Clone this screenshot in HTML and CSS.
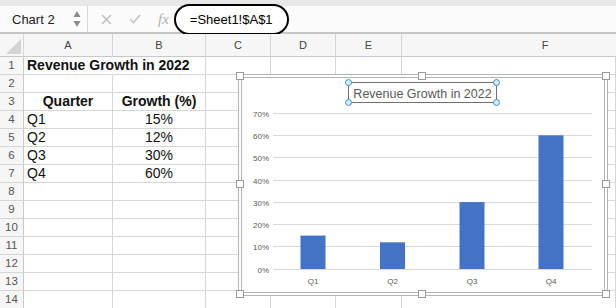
FILE: index.html
```html
<!DOCTYPE html>
<html lang="en">
<head>
    <meta charset="UTF-8">
    <title>Revenue Growth - Sheet1</title>
    <link rel="stylesheet" href="styles.css">
</head>
<body>
    <div class="top-strip"></div>
    <div class="formula-bar">
        <div class="name-box">
            <span>Chart 2</span>
            <svg class="spinner" width="8" height="18" viewBox="0 0 8 18">
                <path d="M4 1 L7.5 7 L0.5 7 Z" fill="#8a8a8a"/>
                <path d="M4 17 L7.5 11 L0.5 11 Z" fill="#8a8a8a"/>
            </svg>
        </div>
        <svg class="icon-x" width="11" height="11" viewBox="0 0 11 11">
            <path d="M1 1 L10 10 M10 1 L1 10" stroke="#c2c2c2" stroke-width="1.6"/>
        </svg>
        <svg class="icon-check" width="12" height="10" viewBox="0 0 12 10">
            <path d="M1 5 L4.5 8.5 L11 1" fill="none" stroke="#c2c2c2" stroke-width="1.6"/>
        </svg>
        <span class="fx">fx</span>
        <div class="formula">=Sheet1!$A$1</div>
    </div>

    <div class="sheet">
        <div class="row head">
            <div class="corner"></div>
            <div>A</div><div>B</div><div>C</div><div>D</div><div>E</div><div class="col-f">F</div>
        </div>
        <div class="row"><div class="num">1</div><div class="title-cell">Revenue Growth in 2022</div><div></div><div></div><div></div><div></div><div></div></div>
        <div class="row"><div class="num">2</div><div></div><div></div><div></div><div></div><div></div><div></div></div>
        <div class="row"><div class="num">3</div><div class="th">Quarter</div><div class="th">Growth (%)</div><div></div><div></div><div></div><div></div></div>
        <div class="row"><div class="num">4</div><div>Q1</div><div class="mid">15%</div><div></div><div></div><div></div><div></div></div>
        <div class="row"><div class="num">5</div><div>Q2</div><div class="mid">12%</div><div></div><div></div><div></div><div></div></div>
        <div class="row"><div class="num">6</div><div>Q3</div><div class="mid">30%</div><div></div><div></div><div></div><div></div></div>
        <div class="row"><div class="num">7</div><div>Q4</div><div class="mid">60%</div><div></div><div></div><div></div><div></div></div>
        <div class="row"><div class="num">8</div><div></div><div></div><div></div><div></div><div></div><div></div></div>
        <div class="row"><div class="num">9</div><div></div><div></div><div></div><div></div><div></div><div></div></div>
        <div class="row"><div class="num">10</div><div></div><div></div><div></div><div></div><div></div><div></div></div>
        <div class="row"><div class="num">11</div><div></div><div></div><div></div><div></div><div></div><div></div></div>
        <div class="row"><div class="num">12</div><div></div><div></div><div></div><div></div><div></div><div></div></div>
        <div class="row"><div class="num">13</div><div></div><div></div><div></div><div></div><div></div><div></div></div>
        <div class="row"><div class="num">14</div><div></div><div></div><div></div><div></div><div></div><div></div></div>

        <!-- chart floats over the cells -->
        <div class="chart">
            <svg width="362" height="214" viewBox="0 0 362 214">
                <g stroke="#d9d9d9" stroke-width="1">
                    <line x1="31" y1="35.5" x2="350" y2="35.5"/>
                    <line x1="31" y1="57.5" x2="350" y2="57.5"/>
                    <line x1="31" y1="79.5" x2="350" y2="79.5"/>
                    <line x1="31" y1="102.5" x2="350" y2="102.5"/>
                    <line x1="31" y1="124.5" x2="350" y2="124.5"/>
                    <line x1="31" y1="146.5" x2="350" y2="146.5"/>
                    <line x1="31" y1="168.5" x2="350" y2="168.5"/>
                    <line x1="31" y1="191.5" x2="350" y2="191.5"/>
                </g>
                <g class="axis" text-anchor="end">
                    <text x="27" y="38.5">70%</text>
                    <text x="27" y="60.5">60%</text>
                    <text x="27" y="82.5">50%</text>
                    <text x="27" y="105.5">40%</text>
                    <text x="27" y="127.5">30%</text>
                    <text x="27" y="149.5">20%</text>
                    <text x="27" y="171.5">10%</text>
                    <text x="27" y="194.5">0%</text>
                </g>
                <g fill="#4472c4">
                    <rect x="58.5" y="157.6" width="25" height="33.4"/>
                    <rect x="138" y="164.3" width="25" height="26.7"/>
                    <rect x="217.5" y="124.1" width="25" height="66.9"/>
                    <rect x="296.5" y="57.3" width="25" height="133.7"/>
                </g>
                <g class="axis" text-anchor="middle">
                    <text x="71" y="206">Q1</text>
                    <text x="150.5" y="206">Q2</text>
                    <text x="230" y="206">Q3</text>
                    <text x="309" y="206">Q4</text>
                </g>
                <rect x="106.5" y="4.5" width="148" height="20" fill="none" stroke="#707070" stroke-width="1"/>
                <text class="chart-title" x="180.5" y="19.5" text-anchor="middle">Revenue Growth in 2022</text>
                <g fill="#d6eaf8" stroke="#3d8fd1" stroke-width="1">
                    <circle cx="106.5" cy="4.5" r="3"/>
                    <circle cx="254.5" cy="4.5" r="3"/>
                    <circle cx="106.5" cy="24.5" r="3"/>
                    <circle cx="254.5" cy="24.5" r="3"/>
                </g>
            </svg>
            <span class="handle h-tl"></span>
            <span class="handle h-tm"></span>
            <span class="handle h-tr"></span>
            <span class="handle h-ml"></span>
            <span class="handle h-mr"></span>
            <span class="handle h-bl"></span>
            <span class="handle h-bm"></span>
            <span class="handle h-br"></span>
        </div>
    </div>
</body>
</html>
```

FILE: styles.css
```css
body {
    margin: 0;
    width: 616px;
    height: 308px;
    overflow: hidden;
    font-family: "Liberation Sans", Arial, sans-serif;
    background-color: #ffffff;
    color: #111;
}
.top-strip {
    height: 6px;
    background-color: #e8e8e8;
}
.formula-bar {
    height: 28px;
    box-sizing: border-box;
    display: flex;
    align-items: center;
    background-color: #fbfbfb;
    border-bottom: 2px solid #c6c6c6;
}
.name-box {
    width: 88px;
    height: 100%;
    box-sizing: border-box;
    display: flex;
    align-items: center;
    justify-content: space-between;
    padding: 0 6px 0 12px;
    border-right: 1px solid #d8d8d8;
    font-size: 13px;
    color: #222;
}
.icon-x {
    margin-left: 13px;
}
.icon-check {
    margin-left: 17px;
}
.fx {
    margin-left: 17px;
    font-family: "Liberation Serif", serif;
    font-style: italic;
    font-size: 15px;
    color: #b0b0b0;
}
.formula {
    margin-left: 5px;
    height: 31px;
    box-sizing: border-box;
    padding: 0 14px 0 14px;
    display: flex;
    align-items: center;
    border: 2.5px solid #000;
    border-radius: 16px;
    font-size: 13px;
    color: #000;
    background-color: #fff;
}
.sheet {
    position: relative;
}
.row {
    display: grid;
    grid-template-columns: 24px 89px 93px 65px 65px 66px 1fr;
    height: 18px;
}
.row > div {
    box-sizing: border-box;
    border-right: 1px solid #d6d6d6;
    border-bottom: 1px solid #d6d6d6;
    font-size: 14px;
    line-height: 17px;
    padding-left: 3px;
    white-space: nowrap;
}
.row.head {
    height: 23px;
}
.row.head > div {
    background-color: #f6f6f6;
    border-bottom-color: #c8c8c8;
    font-size: 11px;
    line-height: 22px;
    color: #444;
    text-align: center;
    padding-left: 0;
}
/* column F runs on past the window, so its label sits right of centre */
.row.head > .col-f {
    padding-left: 72px;
    border-right: none;
}
.row .corner {
    position: relative;
}
.corner::after {
    content: "";
    position: absolute;
    right: 2px;
    bottom: 2px;
    border-style: solid;
    border-width: 0 0 15px 15px;
    border-color: transparent transparent #d4d4d4 transparent;
}
.row > .num {
    background-color: #f6f6f6;
    border-right-color: #c8c8c8;
    font-size: 11.5px;
    color: #555;
    text-align: center;
    padding-left: 0;
}
.row > .title-cell {
    font-weight: bold;
    overflow: visible;
    border-right-color: transparent;
}
.row > .th {
    font-weight: bold;
    text-align: center;
    padding-left: 0;
}
.row > .mid {
    text-align: center;
    padding-left: 0;
}
.chart {
    position: absolute;
    left: 238px;
    top: 40px;
    width: 370px;
    height: 222px;
    box-sizing: border-box;
    border: 4px double #b4b4b4;
    background-color: #fff;
}
.chart svg {
    display: block;
}
.axis {
    font-family: "Liberation Sans", Arial, sans-serif;
    font-size: 8px;
    fill: #595959;
}
.chart-title {
    font-family: "Liberation Sans", Arial, sans-serif;
    font-size: 12.5px;
    fill: #595959;
}
.handle {
    position: absolute;
    width: 8px;
    height: 8px;
    box-sizing: border-box;
    background-color: #fff;
    border: 1px solid #9a9a9a;
}
.h-tl { left: -6px; top: -6px; }
.h-tm { left: 176px; top: -6px; }
.h-tr { right: -6px; top: -6px; }
.h-ml { left: -6px; top: 102px; }
.h-mr { right: -6px; top: 102px; }
.h-bl { left: -6px; bottom: -6px; }
.h-bm { left: 176px; bottom: -6px; }
.h-br { right: -6px; bottom: -6px; }
```
